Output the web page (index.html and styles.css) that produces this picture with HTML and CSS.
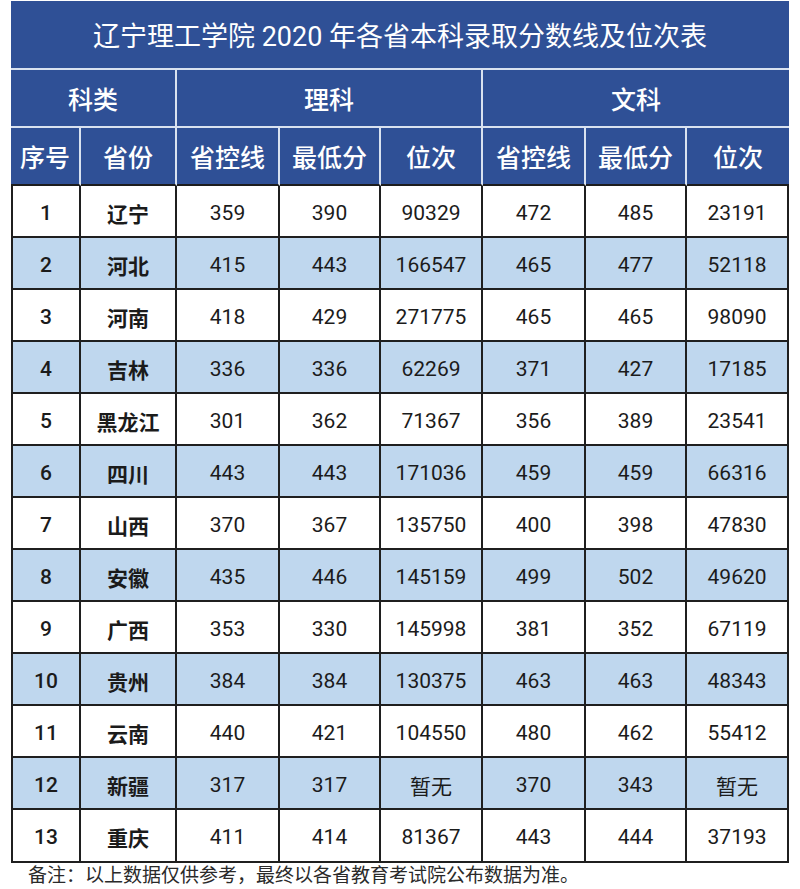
FILE: index.html
```html
<!DOCTYPE html>
<html lang="zh-CN">
<head>
<meta charset="utf-8">
<title>辽宁理工学院 2020 年各省本科录取分数线及位次表</title>
<link rel="stylesheet" href="styles.css">
</head>
<body>
<div class="page">
  <table class="score-table">
    <colgroup>
      <col class="c-no"><col class="c-prov">
      <col class="c-a"><col class="c-b"><col class="c-c">
      <col class="c-a"><col class="c-b"><col class="c-c">
    </colgroup>
    <thead>
      <tr class="title-row"><th colspan="8" class="title">辽宁理工学院 2020 年各省本科录取分数线及位次表</th></tr>
      <tr class="group-row">
        <th colspan="2">科类</th>
        <th colspan="3">理科</th>
        <th colspan="3" class="last">文科</th>
      </tr>
      <tr class="label-row">
        <th>序号</th><th>省份</th>
        <th>省控线</th><th>最低分</th><th>位次</th>
        <th>省控线</th><th>最低分</th><th class="last">位次</th>
      </tr>
    </thead>
    <tbody>
      <tr><td class="no">1</td><td class="prov">辽宁</td><td>359</td><td>390</td><td>90329</td><td>472</td><td>485</td><td>23191</td></tr>
      <tr><td class="no">2</td><td class="prov">河北</td><td>415</td><td>443</td><td>166547</td><td>465</td><td>477</td><td>52118</td></tr>
      <tr><td class="no">3</td><td class="prov">河南</td><td>418</td><td>429</td><td>271775</td><td>465</td><td>465</td><td>98090</td></tr>
      <tr><td class="no">4</td><td class="prov">吉林</td><td>336</td><td>336</td><td>62269</td><td>371</td><td>427</td><td>17185</td></tr>
      <tr><td class="no">5</td><td class="prov">黑龙江</td><td>301</td><td>362</td><td>71367</td><td>356</td><td>389</td><td>23541</td></tr>
      <tr><td class="no">6</td><td class="prov">四川</td><td>443</td><td>443</td><td>171036</td><td>459</td><td>459</td><td>66316</td></tr>
      <tr><td class="no">7</td><td class="prov">山西</td><td>370</td><td>367</td><td>135750</td><td>400</td><td>398</td><td>47830</td></tr>
      <tr><td class="no">8</td><td class="prov">安徽</td><td>435</td><td>446</td><td>145159</td><td>499</td><td>502</td><td>49620</td></tr>
      <tr><td class="no">9</td><td class="prov">广西</td><td>353</td><td>330</td><td>145998</td><td>381</td><td>352</td><td>67119</td></tr>
      <tr><td class="no">10</td><td class="prov">贵州</td><td>384</td><td>384</td><td>130375</td><td>463</td><td>463</td><td>48343</td></tr>
      <tr><td class="no">11</td><td class="prov">云南</td><td>440</td><td>421</td><td>104550</td><td>480</td><td>462</td><td>55412</td></tr>
      <tr><td class="no">12</td><td class="prov">新疆</td><td>317</td><td>317</td><td>暂无</td><td>370</td><td>343</td><td>暂无</td></tr>
      <tr><td class="no">13</td><td class="prov">重庆</td><td>411</td><td>414</td><td>81367</td><td>443</td><td>444</td><td>37193</td></tr>
    </tbody>
  </table>
  <p class="note">备注：以上数据仅供参考，最终以各省教育考试院公布数据为准。</p>
</div>
</body>
</html>
```
FILE: styles.css
```css
html, body {
  margin: 0;
  padding: 0;
  background: #ffffff;
}
body {
  font-family: Roboto, "Noto Sans CJK SC", sans-serif;
  color: #1b1b1b;
}
.page {
  width: 800px;
  padding-top: 1px;
}
.score-table {
  margin-left: 11px;
  width: 778px;
  table-layout: fixed;
  border-collapse: separate;
  border-spacing: 0;
}
.c-no { width: 70px; }
.c-prov { width: 96px; }
.c-a { width: 103px; }
.c-b { width: 101px; }
.c-c { width: 102px; }

.score-table th {
  background: #2f5096;
  color: #ffffff;
  font-weight: 500;
  padding: 0;
  text-align: center;
  border-right: 2px solid #d9e2f0;
  border-bottom: 2px solid #d9e2f0;
}
.score-table th.last,
.score-table th.title {
  border-right: none;
}
.title-row th {
  height: 67px;
  font-size: 27px;
  font-weight: 400;
}
.group-row th {
  height: 56px;
  font-size: 25px;
}
.label-row th {
  height: 56px;
  font-size: 25px;
  border-bottom: 2px solid #1d1d1d;
}
.score-table td {
  height: 47px;
  padding: 3px 0 0;
  text-align: center;
  font-size: 21px;
  border-right: 2px solid #1f1f1f;
  border-bottom: 2px solid #1f1f1f;
}
.score-table tbody tr:last-child td {
  height: 48px;
}
.score-table td:first-child {
  border-left: 2px solid #1f1f1f;
}
.score-table td.no {
  font-weight: 500;
}
.score-table td.prov {
  font-weight: 700;
}
.score-table tbody tr:nth-child(even) td {
  background: #bfd7ee;
}
.note {
  margin: 3px 0 0 28px;
  font-size: 19px;
  line-height: 20px;
  color: #2a2a2a;
}
```
